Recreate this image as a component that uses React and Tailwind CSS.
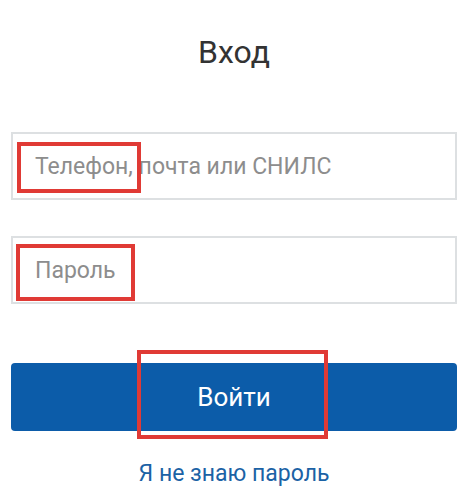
import React from "react";

// Рамки-выделения поверх полей (аннотации скриншота)
function Mark({ className }) {
  return <div className={`absolute border-[4px] border-[#e03a35] pointer-events-none ${className}`} />;
}

function Field({ label, children }) {
  return (
    <div className="relative h-[68px] border-2 border-[#dde0e2] flex items-center pl-[22px]">
      <span className="text-[23px] leading-none text-[#8d8d8d]">{label}</span>
      {children}
    </div>
  );
}

export default function App() {
  return (
    <div className="w-full h-[491px] bg-white px-[11px] pt-[36px] flex flex-col font-['Roboto','Liberation_Sans',sans-serif] overflow-hidden">
      <h1 className="text-center text-[32px] leading-[32px] text-[#333333]">Вход</h1>

      <div className="mt-[64px] flex flex-col gap-[36px]">
        <Field label="Телефон, почта или СНИЛС">
          <Mark className="left-[4px] top-[8px] w-[124px] h-[51px]" />
        </Field>
        <Field label="Пароль">
          <Mark className="left-[3px] top-[6px] w-[119px] h-[57px]" />
        </Field>
      </div>

      <button className="relative mt-[59px] w-full h-[68px] shrink-0 rounded-[4px] bg-[#0c5ca9] flex items-center justify-center">
        <span className="text-[26px] leading-none text-white">Войти</span>
        <Mark className="left-[126px] top-[-13px] w-[191px] h-[89px]" />
      </button>

      <div className="mt-[31px] text-center text-[23px] leading-[23px] text-[#1b62a5]">Я не знаю пароль</div>
    </div>
  );
}
